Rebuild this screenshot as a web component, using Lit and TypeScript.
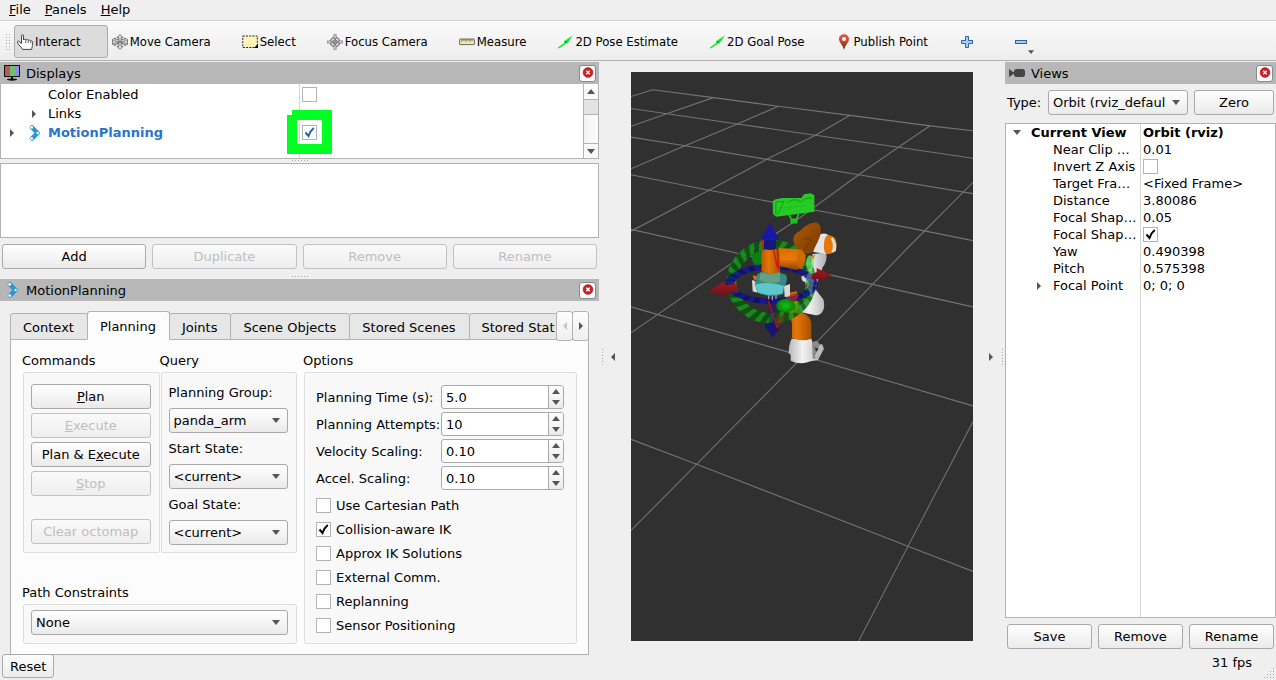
import { LitElement, html, svg, css, nothing } from "lit";
import { customElement, state } from "lit/decorators.js";
import { classMap } from "lit/directives/class-map.js";

/* ---------- shared drawing helpers ---------- */

const icon = (body: unknown) =>
  html`<svg class="icon" width="16" height="16" viewBox="0 0 16 16" aria-hidden="true">${body}</svg>`;

const arrowPaths: Record<string, string> = {
  up: "M0 5 L4 0 L8 5Z",
  down: "M0 0 L8 0 L4 5Z",
  left: "M4 0 L4 8 L0 4Z",
  right: "M0 0 L4 4 L0 8Z",
};
const arrow = (dir: string) => {
  const tall = dir === "left" || dir === "right";
  const w = tall ? 4 : 8;
  const h = tall ? 8 : 5;
  return html`<svg class="arrow" width=${w} height=${h} viewBox="0 0 ${w} ${h}" aria-hidden="true">
    <path d=${arrowPaths[dir]} fill="currentColor" />
  </svg>`;
};

const dots = (cols: number, rows: number, keep = (_c: number, _r: number) => true) => {
  const cells: unknown[] = [];
  for (let c = 0; c < cols; c++)
    for (let r = 0; r < rows; r++)
      if (keep(c, r)) cells.push(svg`<rect x=${c * 3} y=${r * 3} width="1" height="1" />`);
  return html`<svg class="dots" width=${cols * 3 - 2} height=${rows * 3 - 2} fill="#a8a8a8" aria-hidden="true">${cells}</svg>`;
};

const icons = {
  interact: icon(svg`<path d="M4.500 9V2Q4.500 .6 5.500 .6T6.500 2V6Q6.700 5.200 7.600 5.200T8.800 6.200Q9.100 5.500 10 5.500T11.200 6.600Q11.500 6 12.400 6T13.600 7Q14.300 6.600 15 7T15.400 8V11.500L14.600 15.400H5.500L4.500 13.500L1.700 10.800Q.4 9 .6 7.500Q1.200 6.200 2.800 7.800L4.500 10" fill="#fff" stroke="#333" stroke-width=".9" /><path d="M8.800 6.500V9M11.200 7V9M13.600 7.200V9" stroke="#333" stroke-width=".8" />`),
  move: icon(svg`<path d="M8 .5L11 3.500H9.200V6L12.500 5.500V4L15.600 5.500V10.500L12.500 11.500V10L9.200 9.500V12.500H11L8 15.500L5 12.500H6.800V9.500L3.500 10V11.500L.4 10.500V5.500L3.500 4V5.500L6.800 6V3.500H5Z" fill="#e0e0e0" stroke="#6b6b6b" stroke-width=".9" /><path d="M5.500 4.500L10.500 11M10.500 4.500L5.500 11M1 6.500L15 9.500M15 6.500L1 9.500" stroke="#666" stroke-width=".7" />`),
  select: icon(svg`<rect x="1" y="2" width="14" height="11" fill="#fff5b8" /><rect x=".8" y="2" width="14.500" height="11.500" fill="none" stroke="#222" stroke-dasharray="2 1.200" /><path d="M12 14H16V10Z" fill="#000" />`),
  focus: icon(svg`<circle cx="8" cy="8" r="4.800" fill="#e4e4e4" stroke="#777" stroke-width="1.200" /><path d="M7 0H9V5H7ZM7 11H9V16H7ZM0 7H5V9H0ZM11 7H16V9H11Z" fill="#e8e8e8" stroke="#777" stroke-width=".8" /><circle cx="8" cy="8" r="2.200" fill="#ccc" stroke="#666" /><path d="M8 4V12M4 8H12" stroke="#777" stroke-width=".8" />`),
  measure: icon(svg`<rect x=".6" y="5" width="14.800" height="5.600" rx=".5" fill="#efe6b0" stroke="#6e6a58" /><path d="M3 5V8M5 5V7M7 5V8M9 5V7M11 5V8M13 5V7" stroke="#6e6a58" stroke-width=".9" />`),
  arrow: icon(svg`<path d="M.8 13.800L7.500 8.500L6.800 7.500L15.800 1.200L10.200 9.800L9.200 9.200L2 14.600Z" fill="#00ee22" /><path d="M7.200 7.600L9.800 9.600L9 7.500Z" fill="#0a7a18" />`),
  pin: icon(svg`<defs><linearGradient id="pin" x1="0" y1="0" x2="0" y2="1"><stop offset="0" stop-color="#e8573a" /><stop offset=".45" stop-color="#c8482c" /><stop offset="1" stop-color="#4a3010" /></linearGradient></defs><path d="M8 .2C5 .2 3 2.300 3 5C3 8.500 6.500 10.500 8 15.800C9.500 10.500 13 8.500 13 5C13 2.300 11 .2 8 .2Z" fill="url(#pin)" /><circle cx="8" cy="5" r="2" fill="#fff" />`),
  plus: icon(svg`<path d="M6.500 2.500H9.500V6.500H13.500V9.500H9.500V13.500H6.500V9.500H2.500V6.500H6.500Z" fill="#a9cdf0" stroke="#2f63a8" />`),
  minus: icon(svg`<rect x="2.500" y="6.500" width="11" height="3" fill="#a9cdf0" stroke="#2f63a8" />`),
  monitor: icon(svg`<rect x=".5" y=".5" width="15" height="11" fill="#fff" stroke="#111" /><rect x="1" y="1" width="5" height="10" fill="#b55b5b" /><rect x="6" y="1" width="5" height="10" fill="#6fc06f" /><rect x="11" y="1" width="4" height="10" fill="#8f8fe8" /><path d="M7 12H9V14H7Z" fill="#111" /><ellipse cx="8" cy="14.600" rx="5" ry="1.100" fill="#111" />`),
  motion: icon(svg`<path d="M6 2.500L11.500 8L6 13.500" fill="none" stroke="#2a94cf" stroke-width="4.500" stroke-linejoin="round" stroke-linecap="round" /><circle cx="5.700" cy="2.400" r="1.400" fill="#fff" /><circle cx="11.600" cy="8" r="1.200" fill="#fff" /><circle cx="5.700" cy="13.600" r="1.400" fill="#fff" />`),
  camera: icon(svg`<rect x="5" y="4" width="11" height="8" rx="2.500" fill="#454545" /><path d="M0 4L4.500 7.200V9L0 12Z" fill="#454545" /><rect x="3" y="7" width="3" height="2" fill="#454545" />`),
  close: icon(svg`<circle cx="8" cy="7.500" r="4.800" fill="#d11f22" stroke="#a81518" stroke-width=".8" /><path d="M6.300 5.800L9.700 9.200M9.700 5.800L6.300 9.200" stroke="#fff" stroke-width="1.500" />`),
};

/* ---------- shared styles ---------- */

const controls = css`
  * {
    box-sizing: border-box;
  }
  button,
  select,
  input {
    font: inherit;
    color: inherit;
    margin: 0;
  }
  svg {
    display: block;
    flex: none;
  }
  .arrow {
    color: #555;
  }
  .btn {
    height: 25px;
    padding: 0 4px;
    border: 1px solid #a9a9a9;
    border-radius: 3px;
    background: linear-gradient(#fefefe, #ebebeb);
    white-space: nowrap;
    min-width: 0;
  }
  .btn:disabled {
    color: #bebebe;
    border-color: #c2c2c2;
    background: linear-gradient(#fafafa, #eeeeee);
  }
  .combo {
    position: relative;
    display: block;
    min-width: 0;
  }
  .combo select {
    display: block;
    appearance: none;
    width: 100%;
    height: 25px;
    padding: 0 20px 0 4px;
    border: 1px solid #a9a9a9;
    border-radius: 3px;
    background: linear-gradient(#fefefe, #ebebeb);
  }
  .combo .arrow {
    position: absolute;
    right: 8px;
    top: 10px;
    pointer-events: none;
  }
  .check {
    display: block;
    flex: none;
    appearance: none;
    width: 15px;
    height: 15px;
    border: 1px solid #b4b4b4;
    background: #fff center / 13px 13px no-repeat;
  }
  .check:checked {
    background-image: url("data:image/svg+xml,%3Csvg xmlns='http://www.w3.org/2000/svg' viewBox='0 0 13 13'%3E%3Cpath d='M2.500 6.500L5.500 10Q7 5 10.800 2' fill='none' stroke='%23000' stroke-width='2'/%3E%3C/svg%3E");
  }
  .check.blue:checked {
    background-image: url("data:image/svg+xml,%3Csvg xmlns='http://www.w3.org/2000/svg' viewBox='0 0 13 13'%3E%3Cpath d='M2.500 6.500L5.500 10Q7 5 10.800 2' fill='none' stroke='%232465a8' stroke-width='2'/%3E%3C/svg%3E");
  }
  .titlebar {
    display: flex;
    align-items: center;
    flex: none;
    gap: 6px;
    height: 22px;
    padding: 0 3px 0 4px;
    background: #b7b7b7;
  }
  .titlebar h2 {
    flex: 1;
    margin: 0;
    font-size: 13px;
    font-weight: normal;
  }
  .close {
    display: flex;
    align-items: center;
    justify-content: center;
    width: 17px;
    height: 17px;
    padding: 0;
    border: 1px solid #8a8a8a;
    border-radius: 3px;
    background: #fafafa;
  }
  .tree {
    width: 100%;
    border-collapse: collapse;
    table-layout: fixed;
  }
  .tree td {
    padding: 0;
    white-space: nowrap;
    overflow: hidden;
  }
  .tree td + td {
    padding-left: 2px;
  }
  .tree .name {
    display: flex;
    align-items: center;
  }
  .twist {
    display: grid;
    place-items: center;
    flex: none;
    width: 22px;
  }
  .indent {
    flex: none;
    width: 3px;
  }
`;

/* ---------- displays panel ---------- */

@customElement("displays-panel")
export class DisplaysPanel extends LitElement {
  static styles = [
    controls,
    css`
      :host {
        display: flex;
        flex-direction: column;
      }
      .list {
        position: relative;
        display: flex;
        height: 75px;
        border: 1px solid #b2b2b2;
        border-top: 0;
        background: #fff;
      }
      .rows {
        flex: 1;
        min-width: 0;
        padding-top: 1px;
        background: linear-gradient(#d6d6d6, #d6d6d6) 298px 0 / 1px 100% no-repeat;
      }
      .label-col {
        width: 299px;
      }
      .tree td {
        height: 19px;
      }
      .tree .icon {
        margin-right: 6px;
      }
      .mp {
        font-weight: bold;
        color: #2a76c6;
      }
      .scroll {
        display: flex;
        flex-direction: column;
        width: 15px;
        border-left: 1px solid #b2b2b2;
        background: linear-gradient(90deg, #f2f2f2, #fdfdfd);
      }
      .scroll button {
        display: grid;
        place-items: center;
        height: 15px;
        padding: 0;
        border: 0;
        background: #fafafa;
      }
      .scroll .thumb {
        height: 16px;
        border: solid #b2b2b2;
        border-width: 1px 0;
        background: #e3e3e3;
      }
      .scroll .last {
        margin-top: auto;
        border-top: 1px solid #b2b2b2;
      }
      .marker {
        position: absolute;
        left: 286px;
        top: 26px;
        pointer-events: none;
      }
      .grip {
        display: flex;
        justify-content: center;
        padding: 1px 0 2px;
      }
      .about {
        height: 75px;
        border: 1px solid #b2b2b2;
        background: #fff;
      }
      .actions {
        display: grid;
        grid-template-columns: repeat(4, minmax(0, 1fr));
        gap: 6px;
        padding: 6px 2px;
      }
    `,
  ];

  render() {
    return html`
      <header class="titlebar">
        ${icons.monitor}
        <h2>Displays</h2>
        <button class="close" aria-label="Close Displays">${icons.close}</button>
      </header>
      <div class="list">
        <div class="rows">
          <table class="tree" aria-label="Displays">
            <colgroup><col class="label-col" /><col /></colgroup>
            <tr>
              <td><span class="name"><span class="twist"></span><span class="twist"></span><span class="indent"></span>Color Enabled</span></td>
              <td><input class="check" type="checkbox" aria-label="Color Enabled" /></td>
            </tr>
            <tr>
              <td><span class="name"><span class="twist"></span><span class="twist">${arrow("right")}</span><span class="indent"></span>Links</span></td>
              <td></td>
            </tr>
            <tr>
              <td><span class="name mp"><span class="twist">${arrow("right")}</span><span class="indent"></span>${icons.motion}MotionPlanning</span></td>
              <td><input class="check blue" type="checkbox" checked aria-label="MotionPlanning" /></td>
            </tr>
          </table>
        </div>
        <div class="scroll">
          <button aria-label="Scroll up">${arrow("up")}</button>
          <div class="thumb"></div>
          <button class="last" aria-label="Scroll down">${arrow("down")}</button>
        </div>
        <svg class="marker" width="45" height="44" viewBox="0 0 45 44" aria-hidden="true">
          <path d="M5 0H45V44H0V5H5ZM10 10V34H35V10Z" fill="#00ff22" fill-rule="evenodd" />
        </svg>
      </div>
      <div class="grip">${dots(6, 1)}</div>
      <div class="about"></div>
      <div class="actions">
        <button class="btn">Add</button>
        <button class="btn" disabled>Duplicate</button>
        <button class="btn" disabled>Remove</button>
        <button class="btn" disabled>Rename</button>
      </div>
      <div class="grip">${dots(6, 1)}</div>
    `;
  }
}

/* ---------- motion planning panel ---------- */

@customElement("planning-panel")
export class PlanningPanel extends LitElement {
  static styles = [
    controls,
    css`
      :host {
        display: flex;
        flex-direction: column;
        flex: 1;
      }
      .body {
        display: flex;
        flex-direction: column;
        flex: 1;
        padding: 10px 10px 0;
      }
      .tabs {
        position: relative;
        z-index: 1;
        display: flex;
        align-items: flex-end;
        margin-bottom: -1px;
      }
      .strip {
        display: flex;
        flex: 1;
        align-items: flex-end;
        overflow: hidden;
      }
      .tab {
        flex: none;
        height: 27px;
        padding: 2px 13px 0 12px;
        margin-right: -1px;
        border: 1px solid #b2b2b2;
        border-radius: 3px 3px 0 0;
        background: #e7e7e7;
      }
      .tab.on {
        height: 29px;
        border-bottom-color: #fcfcfc;
        background: #fcfcfc;
      }
      .step {
        display: grid;
        place-items: center;
        width: 17px;
        height: 30px;
        padding: 0;
        margin: 0 0 -1px -1px;
        border: 1px solid #b2b2b2;
        border-radius: 3px;
        background: linear-gradient(#fefefe, #efefef);
      }
      .step:disabled .arrow {
        color: #c6c6c6;
      }
      .pane {
        flex: 1;
        display: grid;
        grid-template-columns: minmax(0, 274fr) minmax(0, 273fr);
        gap: 7px;
        padding: 11px 11px 10px 12px;
        border: 1px solid #b2b2b2;
        background: #fcfcfc;
      }
      .side {
        display: flex;
        flex-direction: column;
        justify-content: space-between;
      }
      .pair {
        display: grid;
        grid-template-columns: repeat(2, minmax(0, 1fr));
        gap: 1px;
      }
      .group {
        display: flex;
        flex-direction: column;
        min-width: 0;
      }
      h3 {
        height: 21px;
        margin: 0 -1px;
        font-size: 13px;
        font-weight: normal;
        line-height: 20px;
      }
      .frame {
        flex: 1;
        display: flex;
        flex-direction: column;
        border: 1px solid #dedede;
        border-radius: 2px;
        background: #f8f8f8;
      }
      .commands {
        gap: 4px;
        padding: 11px 8px 8px 7px;
      }
      .commands .apart {
        margin-top: 19px;
      }
      .query {
        padding: 4px 8px 7px 7px;
      }
      .query label {
        height: 31px;
        line-height: 31px;
      }
      .constraints {
        padding: 5px 8px 8px 7px;
      }
      .options {
        padding: 12px 12px 0 11px;
      }
      .spins {
        display: grid;
        grid-template-columns: 125px minmax(0, 1fr);
        gap: 3px 0;
        align-items: center;
      }
      .spins label {
        white-space: nowrap;
      }
      .spin {
        display: flex;
        height: 24px;
        border: 1px solid #a9a9a9;
        border-radius: 3px;
        background: #fff;
        overflow: hidden;
      }
      .spin input {
        flex: 1;
        min-width: 0;
        padding: 0 4px;
        border: 0;
        outline: 0;
        background: transparent;
        appearance: textfield;
      }
      .spin input::-webkit-inner-spin-button {
        appearance: none;
        margin: 0;
      }
      .spin div {
        display: grid;
        grid-template-rows: 1fr 1fr;
        width: 15px;
        border-left: 1px solid #a9a9a9;
        background: linear-gradient(#fefefe, #ebebeb);
      }
      .spin button {
        display: grid;
        place-items: center;
        padding: 0;
        border: 0;
        background: none;
      }
      .checks {
        display: grid;
        gap: 8px;
        padding-top: 7px;
      }
      .checks label {
        display: flex;
        align-items: center;
        gap: 5px;
        height: 16px;
      }
    `,
  ];

  private tabs = ["Context", "Planning", "Joints", "Scene Objects", "Stored Scenes", "Stored Stat"];

  private spins: [string, string, string, string][] = [
    ["time", "Planning Time (s):", "5.0", "0.1"],
    ["attempts", "Planning Attempts:", "10", "1"],
    ["velocity", "Velocity Scaling:", "0.10", "0.01"],
    ["accel", "Accel. Scaling:", "0.10", "0.01"],
  ];

  private checks: [string, boolean][] = [
    ["Use Cartesian Path", false],
    ["Collision-aware IK", true],
    ["Approx IK Solutions", false],
    ["External Comm.", false],
    ["Replanning", false],
    ["Sensor Positioning", false],
  ];

  @state() private active = "Planning";

  private combo(id: string, value: string, label?: string) {
    return html`<span class="combo">
      <select id=${id} aria-label=${label ?? nothing}><option>${value}</option></select>
      ${arrow("down")}
    </span>`;
  }

  private nudge(id: string, up: boolean) {
    const box = this.renderRoot.querySelector<HTMLInputElement>("#" + id)!;
    up ? box.stepUp() : box.stepDown();
  }

  render() {
    return html`
      <header class="titlebar">
        ${icons.motion}
        <h2>MotionPlanning</h2>
        <button class="close" aria-label="Close MotionPlanning">${icons.close}</button>
      </header>
      <div class="body">
        <div class="tabs">
          <div class="strip" role="tablist">
            ${this.tabs.map(
              (t) => html`<button
                role="tab"
                class=${classMap({ tab: true, on: t === this.active })}
                aria-selected=${t === this.active ? "true" : "false"}
                @click=${() => (this.active = t)}
              >${t}</button>`
            )}
          </div>
          <button class="step" disabled aria-label="Previous tabs">${arrow("left")}</button>
          <button class="step" aria-label="More tabs">${arrow("right")}</button>
        </div>
        <div class="pane" role="tabpanel">
          <div class="side">
            <div class="pair">
              <section class="group">
                <h3>Commands</h3>
                <div class="frame commands">
                  <button class="btn"><u>P</u>lan</button>
                  <button class="btn" disabled><u>E</u>xecute</button>
                  <button class="btn">Plan &amp; E<u>x</u>ecute</button>
                  <button class="btn" disabled><u>S</u>top</button>
                  <button class="btn apart" disabled>Clear octomap</button>
                </div>
              </section>
              <section class="group">
                <h3>Query</h3>
                <div class="frame query">
                  <label for="group">Planning Group:</label>
                  ${this.combo("group", "panda_arm")}
                  <label for="start">Start State:</label>
                  ${this.combo("start", "<current>")}
                  <label for="goal">Goal State:</label>
                  ${this.combo("goal", "<current>")}
                </div>
              </section>
            </div>
            <section>
              <h3>Path Constraints</h3>
              <div class="frame constraints">${this.combo("constraints", "None", "Path Constraints")}</div>
            </section>
          </div>
          <section class="group">
            <h3>Options</h3>
            <div class="frame options">
              <div class="spins">
                ${this.spins.map(
                  ([id, label, value, step]) => html`<label for=${id}>${label}</label>
                    <div class="spin">
                      <input id=${id} type="number" step=${step} value=${value} />
                      <div>
                        <button aria-label="Increase" @click=${() => this.nudge(id, true)}>${arrow("up")}</button>
                        <button aria-label="Decrease" @click=${() => this.nudge(id, false)}>${arrow("down")}</button>
                      </div>
                    </div>`
                )}
              </div>
              <div class="checks">
                ${this.checks.map(
                  ([label, on]) => html`<label><input class="check" type="checkbox" ?checked=${on} />${label}</label>`
                )}
              </div>
            </div>
          </section>
        </div>
      </div>
    `;
  }
}

/* ---------- 3D scene ---------- */

@customElement("scene-view")
export class SceneView extends LitElement {
  static styles = css`
    :host {
      display: block;
      position: relative;
      background: #303030;
      overflow: hidden;
    }
    .scene {
      position: absolute;
      width: 100%;
      height: 100%;
    }
  `;

  private grid = [
    "M3 97L68 79L250 100L445 123L660 147L900 175L1029 188",
    "M3 129L322 170L556 200L805 232L1029 261",
    "M3 205L165 228L410 264L686 305L1029 355",
    "M3 305L237 346L550 398L838 446L1029 480",
    "M3 450L305 510L600 571L1029 656",
    "M3 656L470 775L560 797L1029 919",
    "M3 1008L200 1074L834 1292L1029 1359",
    "M3 176L110 143L250 100",
    "M3 289L165 228L322 170L445 123",
    "M3 455L237 346L410 264L556 200L660 147",
    "M3 725L305 540L500 425L686 305L805 232L900 175",
    "M3 1250L200 1074L500 805L838 495L1029 325",
    "M686 1544L834 1292L1029 961",
  ];

  /* Alternating translucent wedges between two ellipses; skew tilts each wedge. */
  private ring(cx: number, cy: number, outer: number[], inner: number[], count: number, skew: number, colors: string[]) {
    const out: unknown[] = [];
    const at = (k: number, [rx, ry]: number[]) => {
      const a = (k * 2 * Math.PI) / count;
      return `${(cx + rx * Math.cos(a)).toFixed(1)} ${(cy + ry * Math.sin(a)).toFixed(1)}`;
    };
    for (let i = 0; i < count; i++) {
      out.push(
        svg`<path d="M${at(i, outer)}L${at(i + 1, outer)}L${at(i + 1 - skew, inner)}L${at(i - skew, inner)}Z"
          fill=${colors[i % 2]} opacity=".88" />`
      );
    }
    return out;
  }

  render() {
    return html`<svg class="scene" viewBox="3 36 1026 1707" preserveAspectRatio="xMidYMid slice" role="img" aria-label="Robot scene">
      <defs>
        <linearGradient id="white" x1="0" x2="1"><stop offset="0" stop-color="#b8b8b8" /><stop offset=".4" stop-color="#f2f2f2" /><stop offset="1" stop-color="#b0b0b0" /></linearGradient>
        <linearGradient id="orange" x1="0" x2="1"><stop offset="0" stop-color="#b85a00" /><stop offset=".4" stop-color="#e67606" /><stop offset="1" stop-color="#a85000" /></linearGradient>
        <linearGradient id="orangeV" x1="0" y1="0" x2="0" y2="1"><stop offset="0" stop-color="#d86c00" /><stop offset=".5" stop-color="#ea7806" /><stop offset="1" stop-color="#8a4200" /></linearGradient>
        <linearGradient id="brown" x1="0" y1="0" x2="1" y2="1"><stop offset="0" stop-color="#b05804" /><stop offset="1" stop-color="#743a02" /></linearGradient>
        <radialGradient id="ball"><stop offset="0" stop-color="#12c412" /><stop offset="1" stop-color="#0b800e" /></radialGradient>
        <linearGradient id="ruby" x1="0" y1="0" x2="0" y2="1"><stop offset="0" stop-color="#a81820" /><stop offset="1" stop-color="#641418" /></linearGradient>
      </defs>
      <g transform="scale(1 1.129)" fill="none" stroke="#747474" stroke-width="3">${this.grid.map((d) => svg`<path d=${d} />`)}</g>
      <g transform="translate(180 360)">
        <path d="M248 66Q250 58 258 58L278 54L334 54L342 43L362 40L373 46V95L258 110L249 102Z" fill="#24cc24" />
        <path d="M258 66L282 64L266 98L257 102ZM292 68Q312 52 332 66L345 56L366 54" fill="none" stroke="#14a018" stroke-width="3" />
        <path d="M276 84L350 76" stroke="#1aae1c" stroke-width="2" stroke-dasharray="8 3" />
        <path d="M297 104L306 122H318L326 102M304 118H320V128H304Z" fill="none" stroke="#1fc41f" stroke-width="5" />

        <path d="M368 222L408 218Q414 240 398 262L384 300L378 330Q390 346 400 358Q406 380 398 394Q388 410 370 404L330 396L322 380L352 358L346 306Q334 304 334 290L362 262Z" fill="url(#white)" />
        <path d="M386 166Q396 158 410 162L425 172V218L410 222L370 216V190Z" fill="#e4e4e4" />
        <path d="M412 166Q440 164 440 196Q436 224 410 222Q400 216 402 194Q402 174 412 166Z" fill="#e67606" />
        <path d="M428 172Q442 190 438 212Q430 220 424 216Q434 194 422 176Z" fill="#ddd" />
        <path d="M362 232L376 222L370 240Z" fill="#e67606" />
        <path d="M310 182Q308 162 330 152Q360 124 382 128Q398 138 390 168L384 184L366 220L336 222Q312 206 310 182Z" fill="url(#brown)" />
        <path d="M342 180Q356 168 364 182L342 210" fill="none" stroke="#6a3603" stroke-width="3" />

        <path d="M300 488Q296 500 296 520L302 524V542Q330 556 362 544L384 540L402 506L396 492L372 500L364 476H305Z" fill="url(#white)" />
        <path d="M366 486L380 482L392 496L384 534L368 536Z" fill="#8b8b8b" />
        <path d="M394 496L378 532" stroke="#bcbcbc" stroke-width="9" />
        <path d="M374 502L386 506L378 516Z" fill="#333" />
        <path d="M290 340L320 334L324 396Q364 402 364 434V476Q334 486 306 474V430L296 390Z" fill="url(#orange)" />

        ${this.ring(244, 305, [134, 126], [104, 94], 48, 0.9, ["#159418", "#0c5410"])}
        <ellipse cx="204" cy="236" rx="18" ry="20" fill="#0c8010" />
        ${this.ring(245, 312, [139, 60], [112, 44], 44, 0, ["#1414a4", "#0e0e66"])}
        <ellipse cx="360" cy="250" rx="12" ry="24" fill="#78e878" opacity=".7" />
        <path d="M345 300L365 256L372 300L364 352Z" fill="#c5f5c5" opacity=".3" />
        <path d="M366 282L380 276V264L425 286L384 306V298H366Z" fill="url(#ruby)" />

        <path d="M266 204L330 208Q348 218 346 240Q336 268 320 270L266 258Z" fill="url(#orangeV)" />
        <ellipse cx="332" cy="238" rx="12" ry="30" fill="#c86600" opacity=".7" />
        <path d="M186 300L196 304L202 338L188 334ZM282 318L300 312V352L284 350Z" fill="#d8d8d8" />
        <path d="M188 286L204 290L194 302Z" fill="#e87800" />
        <path d="M202 282Q240 266 288 284Q296 302 282 322L280 342Q246 356 204 338L194 314Z" fill="#3a9296" opacity=".9" />
        <path d="M196 314Q240 302 282 318L278 340Q246 350 204 338Z" fill="#5cc8cc" />
        <path d="M214 212Q240 194 268 212L270 276Q242 284 214 274Z" fill="url(#orange)" />
        <path d="M212 276Q242 286 270 276V304Q242 316 208 300Z" fill="#65a080" />
        <path d="M250 206L262 262M262 206L266 270M222 212L216 180" stroke="#d01410" stroke-width="4" />
        <path d="M236 346V358M247 348V360M258 346V356" stroke="#8c9cc4" stroke-width="4" />
        <path d="M222 180H258V206Q240 214 222 206Z" fill="#18187c" />
        <path d="M239 128L266 176Q240 186 214 176Z" fill="#1818a4" />
        <path d="M54 334L104 304V314L142 311Q146 324 143 336L106 340L108 351Z" fill="url(#ruby)" />
        <path d="M236 366H260L256 430H236Z" fill="#15157c" opacity=".45" />
        <path d="M222 434Q248 420 276 436L248 472Z" fill="#151570" />
        <path d="M233 362L262 440L272 432M236 362L250 410L262 446" fill="none" stroke="#a80c20" stroke-width="4" />
        <path d="M252 414L288 402L270 442L260 444Z" fill="#6a3018" opacity=".7" />
        <path d="M288 352L316 338L328 346L300 380Z" fill="#a02838" opacity=".75" />
        <path d="M296 366H324V398H300Z" fill="#60a000" opacity=".7" />
        <ellipse cx="287" cy="377" rx="28" ry="21" fill="url(#ball)" />
      </g>
    </svg>`;
  }
}

/* ---------- views panel ---------- */

@customElement("views-panel")
export class ViewsPanel extends LitElement {
  static styles = [
    controls,
    css`
      :host {
        display: flex;
        flex-direction: column;
      }
      .type {
        display: grid;
        grid-template-columns: 35px minmax(0, 140fr) minmax(0, 80fr);
        column-gap: 6px;
        align-items: center;
        padding: 6px 2px 8px;
      }
      .list {
        flex: 1;
        border: 1px solid #b2b2b2;
        background: linear-gradient(#d6d6d6, #d6d6d6) 134px 0 / 1px 100% no-repeat #fff;
      }
      .label-col {
        width: 135px;
      }
      .tree td {
        height: 17px;
      }
      .tree .top {
        font-weight: bold;
      }
      .actions {
        display: grid;
        grid-template-columns: repeat(3, minmax(0, 1fr));
        gap: 6px;
        padding: 6px 2px;
      }
    `,
  ];

  private rows: [string, string | boolean][] = [
    ["Near Clip …", "0.01"],
    ["Invert Z Axis", false],
    ["Target Fra…", "<Fixed Frame>"],
    ["Distance", "3.80086"],
    ["Focal Shap…", "0.05"],
    ["Focal Shap…", true],
    ["Yaw", "0.490398"],
    ["Pitch", "0.575398"],
    ["Focal Point", "0; 0; 0"],
  ];

  render() {
    return html`
      <header class="titlebar">
        ${icons.camera}
        <h2>Views</h2>
        <button class="close" aria-label="Close Views">${icons.close}</button>
      </header>
      <div class="type">
        <label for="type">Type:</label>
        <span class="combo">
          <select id="type"><option>Orbit (rviz_defaul</option></select>
          ${arrow("down")}
        </span>
        <button class="btn">Zero</button>
      </div>
      <div class="list">
        <table class="tree" aria-label="Current view properties">
          <colgroup><col class="label-col" /><col /></colgroup>
          <tr class="top">
            <td><span class="name"><span class="twist">${arrow("down")}</span><span class="indent"></span>Current View</span></td>
            <td>Orbit (rviz)</td>
          </tr>
          ${this.rows.map(
            ([name, value]) => html`<tr>
              <td>
                <span class="name"><span class="twist"></span><span class="twist">${name === "Focal Point" ? arrow("right") : nothing}</span><span class="indent"></span>${name}</span>
              </td>
              <td>
                ${typeof value === "boolean"
                  ? html`<input class="check" type="checkbox" ?checked=${value} aria-label=${name} />`
                  : value}
              </td>
            </tr>`
          )}
        </table>
      </div>
      <div class="actions">
        <button class="btn">Save</button>
        <button class="btn">Remove</button>
        <button class="btn">Rename</button>
      </div>
    `;
  }
}

/* ---------- window ---------- */

@customElement("app-root")
export class AppRoot extends LitElement {
  static styles = [
    controls,
    css`
      :host {
        display: flex;
        flex-direction: column;
        min-height: 100vh;
        font: 13px/15px "DejaVu Sans", "Noto Sans", sans-serif;
        color: #000;
        background: #efefef;
      }
      .menu {
        display: flex;
        gap: 14px;
        height: 21px;
        padding: 1px 9px 0;
        border-bottom: 1px solid #d3d3d3;
      }
      .menu button {
        height: 16px;
        padding: 0;
        border: 0;
        background: none;
      }
      .toolbar {
        display: flex;
        align-items: center;
        height: 40px;
        padding: 2px 0 0 6px;
        border-bottom: 1px solid #b2b2b2;
        background: linear-gradient(#fafafa, #ededed);
        font-family: "DejaVu Sans Condensed", "DejaVu Sans", sans-serif;
        font-stretch: condensed;
      }
      .toolbar .dots {
        margin-right: 4px;
      }
      .tool {
        display: flex;
        align-items: center;
        gap: 2px;
        height: 33px;
        padding: 0 26px 0 2px;
        border: 1px solid transparent;
        border-radius: 3px;
        margin-right: 1px;
        background: none;
        white-space: nowrap;
      }
      .tool.on {
        border-color: #ababab;
        background: #dcdcdc;
      }
      .tool.small {
        position: relative;
        padding-right: 33px;
      }
      .tool.small .arrow {
        position: absolute;
        left: 17px;
        bottom: 3px;
        width: 6px;
        height: 4px;
      }
      .main {
        flex: 1;
        display: grid;
        grid-template-columns: minmax(0, 599fr) 32px minmax(0, 342fr) 32px minmax(0, 271fr);
        padding-top: 1px;
      }
      .left {
        display: flex;
        flex-direction: column;
      }
      .split {
        display: flex;
        align-items: center;
        justify-content: space-between;
        padding: 0 16px 4px 3px;
      }
      .split.flip {
        flex-direction: row-reverse;
        padding: 0 2px 4px 16px;
      }
      scene-view {
        margin: 10px 0 14px;
      }
      .status {
        display: flex;
        justify-content: space-between;
        height: 26px;
        margin-top: -1px;
        padding-left: 2px;
      }
      .status .btn {
        height: 24px;
        padding: 0 7px;
      }
      .fps {
        display: flex;
        align-items: flex-end;
        gap: 12px;
      }
      .fps span {
        align-self: flex-start;
        padding-top: 1px;
      }
      .fps .dots {
        margin: 0 2px 2px 0;
      }
    `,
  ];

  @state() private tool = "Interact";

  private tools: [string, unknown][] = [
    ["Interact", icons.interact],
    ["Move Camera", icons.move],
    ["Select", icons.select],
    ["Focus Camera", icons.focus],
    ["Measure", icons.measure],
    ["2D Pose Estimate", icons.arrow],
    ["2D Goal Pose", icons.arrow],
    ["Publish Point", icons.pin],
  ];

  render() {
    return html`
      <nav class="menu">
        <button><u>F</u>ile</button>
        <button><u>P</u>anels</button>
        <button><u>H</u>elp</button>
      </nav>
      <div class="toolbar" role="toolbar">
        ${dots(2, 6)}
        ${this.tools.map(
          ([name, glyph]) => html`<button
            class=${classMap({ tool: true, on: name === this.tool })}
            @click=${() => (this.tool = name)}
          >${glyph}${name}</button>`
        )}
        <button class="tool small" aria-label="Add tool">${icons.plus}</button>
        <button class="tool small" aria-label="Remove tool">${icons.minus}${arrow("down")}</button>
      </div>
      <main class="main">
        <div class="left">
          <displays-panel></displays-panel>
          <planning-panel></planning-panel>
        </div>
        <div class="split">${dots(1, 6)}${arrow("left")}</div>
        <scene-view></scene-view>
        <div class="split flip">${dots(1, 6)}${arrow("right")}</div>
        <views-panel></views-panel>
      </main>
      <footer class="status">
        <button class="btn">Reset</button>
        <div class="fps"><span>31 fps</span>${dots(4, 4, (c, r) => c + r >= 3)}</div>
      </footer>
    `;
  }
}
